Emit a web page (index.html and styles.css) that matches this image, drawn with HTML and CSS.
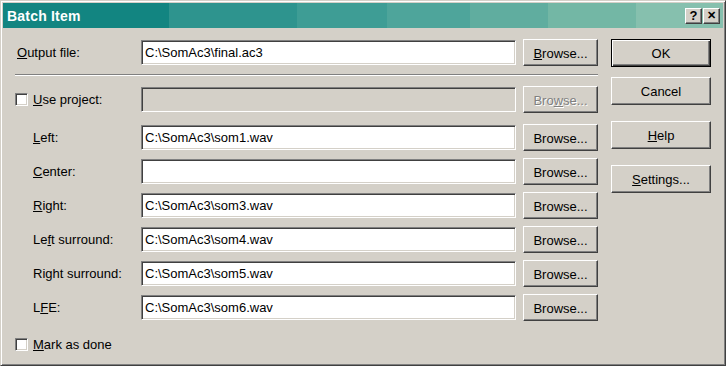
FILE: index.html
```html
<!DOCTYPE html>
<html lang="en">
<head>
    <meta charset="UTF-8">
    <title>Batch Item</title>
    <link rel="stylesheet" href="styles.css">
</head>
<body>
    <div class="window">
        <div class="titlebar">
            <span class="title">Batch Item</span>
            <div class="caption-btns">
                <span class="cap-btn">?</span>
                <span class="cap-btn close">&#x2715;</span>
            </div>
        </div>

        <div class="client">
            <div class="main">
                <div class="row">
                    <label class="lbl out"><u>O</u>utput file:</label>
                    <div class="edit">C:\SomAc3\final.ac3</div>
                    <button class="btn"><u>B</u>rowse...</button>
                </div>

                <div class="sep"></div>

                <div class="row project">
                    <label class="lbl out"><span class="check"></span><u>U</u>se project:</label>
                    <div class="edit disabled"></div>
                    <button class="btn disabled">Bro<u>w</u>se...</button>
                </div>

                <div class="channels">
                    <div class="row">
                        <label class="lbl"><u>L</u>eft:</label>
                        <div class="edit">C:\SomAc3\som1.wav</div>
                        <button class="btn">Browse...</button>
                    </div>
                    <div class="row">
                        <label class="lbl"><u>C</u>enter:</label>
                        <div class="edit"></div>
                        <button class="btn">Browse...</button>
                    </div>
                    <div class="row">
                        <label class="lbl"><u>R</u>ight:</label>
                        <div class="edit">C:\SomAc3\som3.wav</div>
                        <button class="btn">Browse...</button>
                    </div>
                    <div class="row">
                        <label class="lbl">Le<u>f</u>t surround:</label>
                        <div class="edit">C:\SomAc3\som4.wav</div>
                        <button class="btn">Browse...</button>
                    </div>
                    <div class="row">
                        <label class="lbl">Ri<u>g</u>ht surround:</label>
                        <div class="edit">C:\SomAc3\som5.wav</div>
                        <button class="btn">Browse...</button>
                    </div>
                    <div class="row">
                        <label class="lbl">L<u>F</u>E:</label>
                        <div class="edit">C:\SomAc3\som6.wav</div>
                        <button class="btn">Browse...</button>
                    </div>
                </div>

                <label class="lbl done"><span class="check"></span><u>M</u>ark as done</label>
            </div>

            <div class="side">
                <button class="btn wide default">OK</button>
                <button class="btn wide cancel">Cancel</button>
                <button class="btn wide help"><u>H</u>elp</button>
                <button class="btn wide help"><u>S</u>ettings...</button>
            </div>
        </div>
    </div>
</body>
</html>
```

FILE: styles.css
```css
:root {
    --face: #d4d0c8;
    --light: #ffffff;
    --shadow: #808080;
    --dark: #404040;
}

* {
    margin: 0;
    padding: 0;
    box-sizing: border-box;
}

body {
    width: 726px;
    height: 366px;
    background: var(--face);
    font-family: "Liberation Sans", Arial, sans-serif;
    font-size: 13px;
    color: #000;
    overflow: hidden;
}

/* Window frame */
.window {
    width: 726px;
    height: 366px;
    background: var(--face);
    border: 1px solid;
    border-color: var(--face) var(--dark) var(--dark) var(--face);
    box-shadow: inset 1px 1px 0 var(--light), inset -1px -1px 0 var(--shadow);
    padding: 2px;
}

.titlebar {
    height: 25px;
    display: flex;
    align-items: center;
    justify-content: space-between;
    padding: 0 3px 0 4px;
    background: linear-gradient(90deg,
        #128581 0, #128581 166px,
        #2e948e 166px, #2e948e 294px,
        #3e9d95 294px, #3e9d95 384px,
        #4ea59b 384px, #4ea59b 467px,
        #60ad9f 467px, #60ad9f 545px,
        #73b7a5 545px, #73b7a5 633px,
        #86c0ae 633px);
}

.title {
    color: #fff;
    font-weight: bold;
    font-size: 14px;
    letter-spacing: 0.2px;
}

.caption-btns {
    display: flex;
}

.cap-btn {
    width: 17px;
    height: 16px;
    display: flex;
    align-items: center;
    justify-content: center;
    background: var(--face);
    border: 1px solid;
    border-color: var(--light) var(--dark) var(--dark) var(--light);
    box-shadow: inset -1px -1px 0 var(--shadow);
    font-weight: bold;
    font-size: 13px;
    line-height: 1;
}

.cap-btn.close {
    font-size: 11px;
    margin-left: 1px;
}

/* Client area */
.client {
    display: flex;
    padding: 11px 0 0 12px;
}

.main {
    width: 583px;
}

.row {
    display: grid;
    grid-template-columns: 126px 375px 82px;
    align-items: center;
    height: 27px;
}

.row .btn {
    margin-left: 7px;
}

.lbl {
    display: flex;
    align-items: center;
    padding-left: 18px;
    white-space: nowrap;
}

.lbl.out {
    padding-left: 2px;
}

.project .lbl {
    padding-left: 0;
}

.edit {
    height: 25px;
    background: #fff;
    border: 1px solid;
    border-color: var(--shadow) var(--light) var(--light) var(--shadow);
    box-shadow: inset 1px 1px 0 var(--dark), inset -1px -1px 0 var(--face);
    padding: 0 0 0 3px;
    line-height: 23px;
    white-space: nowrap;
    overflow: hidden;
}

.edit.disabled {
    background: var(--face);
}

.btn {
    height: 27px;
    background: var(--face);
    border: 1px solid;
    border-color: var(--light) var(--dark) var(--dark) var(--light);
    box-shadow: inset -1px -1px 0 var(--shadow);
    font-family: inherit;
    font-size: 13px;
    color: #000;
    padding-top: 1px;
}

.btn.disabled {
    color: #808080;
    text-shadow: 1px 1px 0 #fff;
}

.sep {
    height: 2px;
    margin: 8px 0 10px;
    border-top: 1px solid var(--shadow);
    border-bottom: 1px solid var(--light);
}

.project {
    margin-bottom: 11px;
}

.channels {
    display: flex;
    flex-direction: column;
    gap: 7px;
}

.check {
    width: 13px;
    height: 13px;
    margin-right: 5px;
    background: #fff;
    border: 1px solid;
    border-color: var(--shadow) var(--light) var(--light) var(--shadow);
    box-shadow: inset 1px 1px 0 var(--dark), inset -1px -1px 0 var(--face);
}

.done {
    padding-left: 0;
    margin-top: 16px;
}

/* Right column */
.side {
    display: flex;
    flex-direction: column;
    margin-left: 13px;
    width: 100px;
}

.btn.wide {
    width: 100px;
    height: 28px;
}

.btn.default {
    border: 1px solid #000;
    box-shadow: inset 1px 1px 0 var(--light), inset -1px -1px 0 var(--dark), inset -2px -2px 0 var(--shadow);
}

.cancel {
    margin-top: 10px;
}

.help {
    margin-top: 16px;
}
```
